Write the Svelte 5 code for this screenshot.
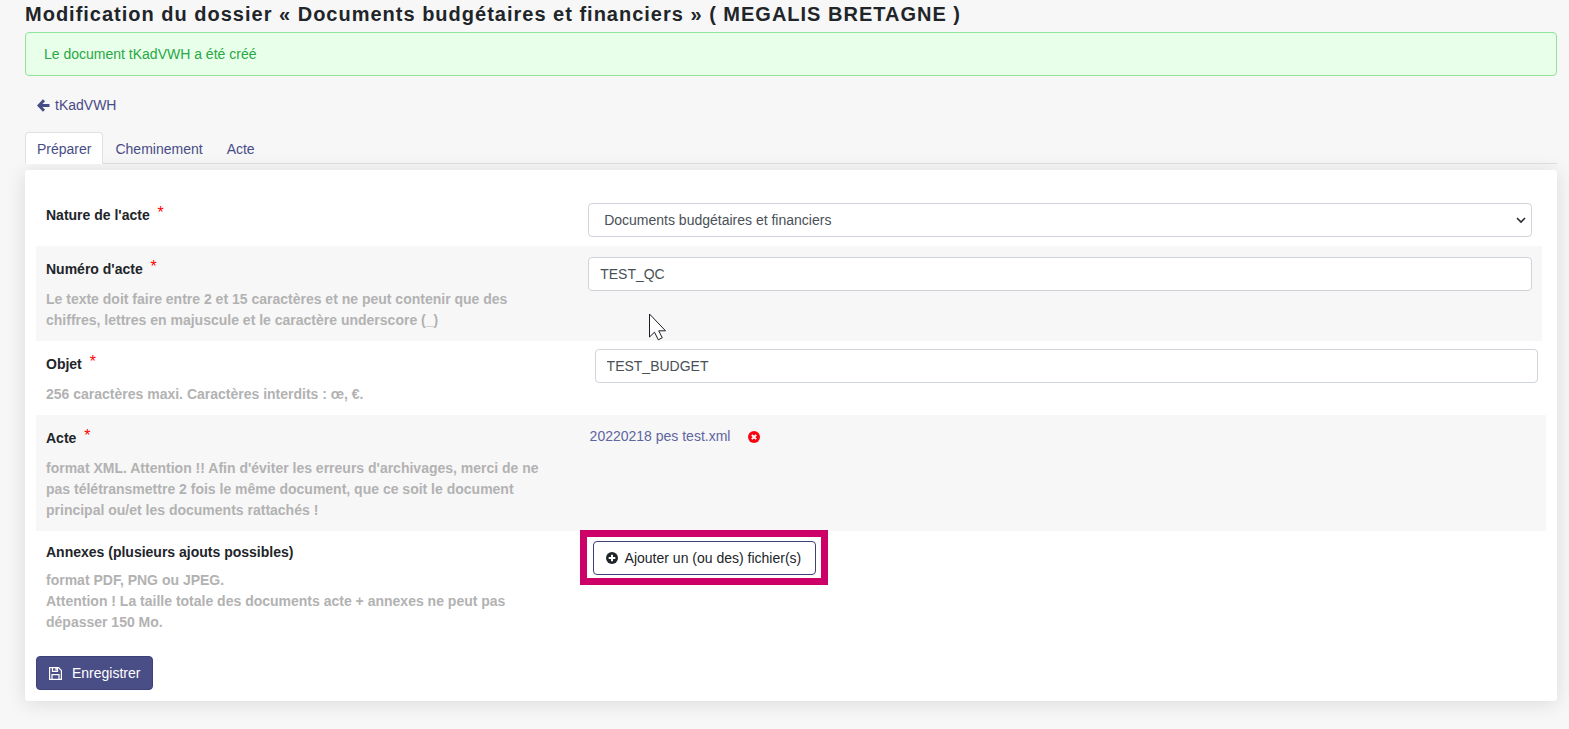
<script lang="ts">
  const tabs = ["Préparer", "Cheminement", "Acte"];

  let activeTab = $state("Préparer");
  let nature = $state("Documents budgétaires et financiers");
  let numero = $state("TEST_QC");
  let objet = $state("TEST_BUDGET");
  let fichier = $state("20220218 pes test.xml");
</script>

<main class="page">
  <h1>Modification du dossier « Documents budgétaires et financiers » ( MEGALIS BRETAGNE )</h1>

  <div class="alert" role="status">Le document tKadVWH a été créé</div>

  <a class="back" href="#document">
    <svg width="13" height="13" viewBox="0 0 13 13" aria-hidden="true">
      <path d="M7 1.2 2 6.5l5 5.3M2.3 6.5h10.2" fill="none" stroke="currentColor" stroke-width="2.9" />
    </svg>
    tKadVWH
  </a>

  <nav class="tabs">
    {#each tabs as tab}
      <a
        class="tab"
        class:active={tab === activeTab}
        href="#{tab}"
        onclick={() => (activeTab = tab)}>{tab}</a>
    {/each}
  </nav>

  <form class="card" onsubmit={(e) => e.preventDefault()}>
    <div class="row inset">
      <div class="head">
        <label class="required" for="nature">Nature de l'acte <sup>*</sup></label>
      </div>
      <div class="field">
        <div class="select">
          <select id="nature" bind:value={nature}>
            <option>Documents budgétaires et financiers</option>
          </select>
          <svg class="chevron" width="10" height="7" viewBox="0 0 10 7" aria-hidden="true">
            <path d="M1 1l4 4 4-4" fill="none" stroke="#2b2a33" stroke-width="1.6" />
          </svg>
        </div>
      </div>
    </div>

    <div class="row inset shaded">
      <div class="head">
        <label class="required" for="numero">Numéro d'acte <sup>*</sup></label>
        <p class="help">
          Le texte doit faire entre 2 et 15 caractères et ne peut contenir que des chiffres, lettres
          en majuscule et le caractère underscore (_)
        </p>
      </div>
      <div class="field">
        <input id="numero" type="text" bind:value={numero} />
        <svg class="pointer" width="19" height="28" viewBox="0 0 19 28" aria-hidden="true">
          <path
            d="M1.5 1v23l5-4.8 3.8 7.6 4-2-3.6-7h6.8z"
            fill="#fff"
            stroke="#1c1c28"
          />
        </svg>
      </div>
    </div>

    <div class="row">
      <div class="head">
        <label class="required" for="objet">Objet <sup>*</sup></label>
        <p class="help">256 caractères maxi. Caractères interdits : œ, €.</p>
      </div>
      <div class="field wide">
        <input id="objet" type="text" bind:value={objet} />
      </div>
    </div>

    <div class="row shaded">
      <div class="head">
        <span class="label required">Acte <sup>*</sup></span>
        <p class="help">
          format XML. Attention !! Afin d'éviter les erreurs d'archivages, merci de ne pas
          télétransmettre 2 fois le même document, que ce soit le document principal ou/et les
          documents rattachés !
        </p>
      </div>
      <div class="field file">
        {#if fichier}
          <a href="#fichier">{fichier}</a>
          <button class="remove" type="button" aria-label="Supprimer" onclick={() => (fichier = "")}>
            <svg width="12" height="12" viewBox="0 0 12 12" aria-hidden="true">
              <circle cx="6" cy="6" r="6" fill="#f90510" />
              <path d="M3.8 3.8l4.4 4.4M8.2 3.8L3.8 8.2" stroke="#fff" stroke-width="1.9" />
            </svg>
          </button>
        {/if}
      </div>
    </div>

    <div class="row">
      <div class="head">
        <span class="label">Annexes (plusieurs ajouts possibles)</span>
        <p class="help">
          format PDF, PNG ou JPEG.<br />
          Attention ! La taille totale des documents acte + annexes ne peut pas dépasser 150 Mo.
        </p>
      </div>
      <div class="upload">
        <div class="highlight">
          <button class="btn btn-outline" type="button">
            <svg width="12" height="12" viewBox="0 0 12 12" aria-hidden="true">
              <circle cx="6" cy="6" r="6" fill="currentColor" />
              <path d="M6 2.7v6.6M2.7 6h6.6" stroke="#fff" stroke-width="2" />
            </svg>
            Ajouter un (ou des) fichier(s)
          </button>
        </div>
      </div>
    </div>

    <button class="btn btn-primary" type="submit">
      <svg width="13" height="13" viewBox="0 0 13 13" fill="none" stroke="currentColor" aria-hidden="true">
        <path d="M.6.6h8.9l2.9 2.9v8.9H.6z" stroke-width="1.2" />
        <path d="M3.5.6v3.8h5V.6M3 12.4V7.6h7v4.8" stroke-width="1.2" />
        <path d="M7.1 1v2.6" stroke-width="1.4" />
      </svg>
      Enregistrer
    </button>
  </form>
</main>

<style>
  :global(body) { background: #f7f7f7; }
  .page {
    padding: 0 12px 28px 25px;
    color: #212529;
    font-family: Arial, "Liberation Sans", sans-serif;
    font-size: 14px; line-height: 21px;
  }
  a { color: #484c86; text-decoration: none; }
  h1 {
    margin: 0 0 4px; font-size: 20px; line-height: 28px;
    font-weight: bold; letter-spacing: 1px;
  }
  .alert {
    padding: 11px 18px 10px; background: #e8ffea; color: #28a745;
    border: 1px solid #90e39c; border-radius: 4px;
  }

  .back {
    display: flex; align-items: center; gap: 5px;
    width: fit-content; margin: 19px 0 16px 12px;
  }

  .tabs { display: flex; border-bottom: 1px solid #dee2e6; }
  .tab {
    margin-bottom: -1px; padding: 6px 11px 3px;
    border: 1px solid transparent; border-radius: 4px 4px 0 0;
  }
  .tab.active { background: #fff; border-color: #dee2e6 #dee2e6 #fff; }

  .card {
    margin-top: 6px; padding: 22px 11px 11px; background: #fff;
    border-radius: 3px; box-shadow: 0 2px 20px rgba(0, 0, 0, 0.12);
  }
  .row { display: grid; grid-template-columns: 9fr 16fr; }
  .inset { margin-right: 4px; }
  .shaded { background: #f7f7f7; }
  .head { padding: 11px 20px 10px 10px; font-weight: bold; }
  .head label, .label { display: block; }
  .required { line-height: 25px; }
  sup {
    margin-left: 4px; color: #f00; font-size: 16px; line-height: 0;
    font-weight: normal; vertical-align: 2px;
  }
  .help { margin: 7px 0 0; color: #b2b2b2; }
  .field { position: relative; padding: 11px 10px 9px; }
  .wide { padding: 8px 8px 8px 15px; }
  .file { display: flex; align-items: flex-start; gap: 18px; }
  .file a { color: #6064a0; }

  input, select {
    display: block; box-sizing: border-box; width: 100%; height: 34px;
    padding: 0 11px; background: #fff; color: #495057;
    border: 1px solid #ced4da; border-radius: 4px; font: inherit;
  }
  select { appearance: none; padding: 0 15px; }
  .select { position: relative; }
  .chevron { position: absolute; right: 6px; top: 14px; pointer-events: none; }
  .pointer { position: absolute; left: 70px; top: 67px; pointer-events: none; }

  .btn {
    display: flex; align-items: center; height: 34px; padding: 0 12px;
    border: 1px solid #3d4178; border-radius: 4px; font: inherit; cursor: pointer;
  }
  .btn-outline { gap: 7px; padding-right: 14px; background: #fff; color: #212529; }
  .btn-primary { gap: 10px; margin-top: 13px; background: #4a4e87; color: #fff; }
  .remove {
    display: flex; align-items: center; height: 21px; padding: 0;
    background: none; border: none; cursor: pointer;
  }
  .highlight {
    width: fit-content; margin-top: -1px; padding: 4px 5px 3px 6px;
    border: 7px solid #cc0066;
  }
</style>
